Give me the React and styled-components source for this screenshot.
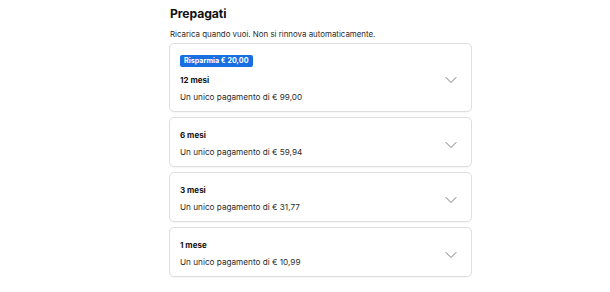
import React from "react";
import styled, { createGlobalStyle } from "styled-components";

const Global = createGlobalStyle`
  html, body { margin: 0; padding: 0; background: #ffffff; }
  body { font-family: Inter, "Noto Sans", "Liberation Sans", sans-serif; color: #121212; }
`;

const Page = styled.div`
  width: 610px;
  height: 292px;
  display: flex;
  justify-content: flex-start;
  padding-left: 169px;
  box-sizing: border-box;
`;

const Section = styled.section`
  width: 303px;
  display: flex;
  flex-direction: column;
  padding-top: 5px;
`;

const Title = styled.h2`
  margin: 0 0 0 1px;
  font-size: 12.2px;
  line-height: 18px;
  font-weight: 700;
  letter-spacing: -0.1px;
  color: #121212;
`;

const Subtitle = styled.p`
  margin: 5px 0 0 1px;
  font-size: 7.9px;
  line-height: 12px;
  color: #2a2a2a;
`;

const List = styled.div`
  margin-top: 3px;
  display: flex;
  flex-direction: column;
  gap: 5px;
`;

const Card = styled.div`
  border: 1px solid #dedede;
  border-radius: 5px;
  box-shadow: 0 1px 1px rgba(0, 0, 0, 0.04);
  padding: 11px 14px 8px 10px;
  display: flex;
  align-items: center;
  justify-content: space-between;
`;

const Info = styled.div`
  display: flex;
  flex-direction: column;
  align-items: flex-start;
`;

const Badge = styled.span`
  background: #1a6fe0;
  color: #ffffff;
  font-size: 7.2px;
  font-weight: 700;
  line-height: 12px;
  height: 12px;
  padding: 0 4px;
  border-radius: 2px;
  margin-bottom: 7px;
`;

const Plan = styled.div`
  font-size: 8px;
  font-weight: 700;
  line-height: 12px;
  color: #121212;
`;

const Price = styled.div`
  margin-top: 5px;
  font-size: 8.2px;
  line-height: 12px;
  color: #2b2b2b;
`;

const ChevronWrap = styled.span`
  display: flex;
  margin-top: 2px;
`;

const Chevron = () => (
  <ChevronWrap>
    <svg width="12" height="8" viewBox="0 0 12 8" fill="none">
      <polyline points="1,1.5 6,6.5 11,1.5" stroke="#6b6b6b" strokeWidth="0.9" strokeLinecap="round" strokeLinejoin="round" />
    </svg>
  </ChevronWrap>
);

const plans = [
  { name: "12 mesi", price: "99,00", badge: "Risparmia € 20,00" },
  { name: "6 mesi", price: "59,94" },
  { name: "3 mesi", price: "31,77" },
  { name: "1 mese", price: "10,99" },
];

export default function App() {
  return (
    <>
      <Global />
      <Page>
        <Section>
          <Title>Prepagati</Title>
          <Subtitle>Ricarica quando vuoi. Non si rinnova automaticamente.</Subtitle>
          <List>
            {plans.map((p) => (
              <Card key={p.name}>
                <Info>
                  {p.badge && <Badge>{p.badge}</Badge>}
                  <Plan>{p.name}</Plan>
                  <Price>Un unico pagamento di € {p.price}</Price>
                </Info>
                <Chevron />
              </Card>
            ))}
          </List>
        </Section>
      </Page>
    </>
  );
}
